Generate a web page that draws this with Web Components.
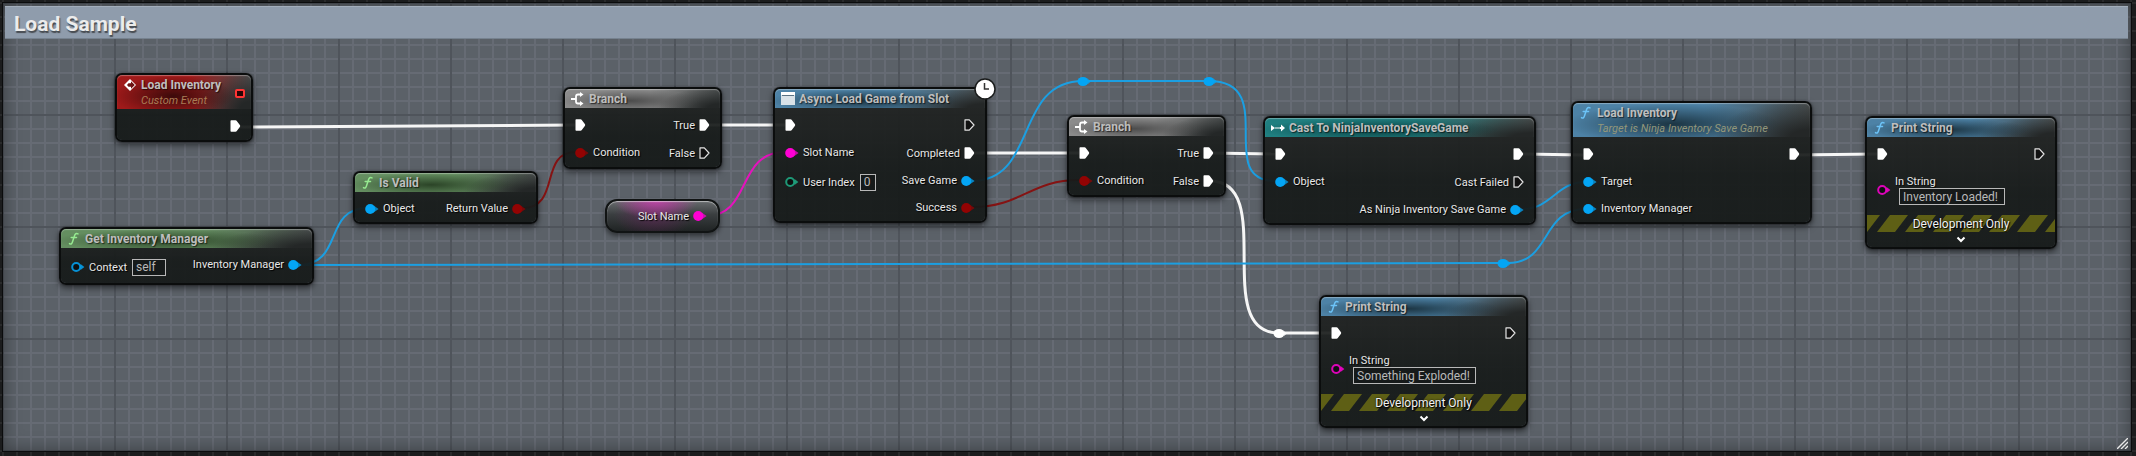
<!DOCTYPE html>
<html lang="en">
<head>
<meta charset="utf-8">
<title>Load Sample</title>
<style>
  html, body { height: 100%; }
  body { margin: 0; background: #1d1e1f; color: #e8e8e8; font: 11px/13px Roboto, "Liberation Sans", sans-serif; overflow: hidden; }
  blueprint-node, variable-node, reroute-knot { position: absolute; }
</style>
</head>
<body>
<graph-canvas>
  <comment-box slot="comment">Load Sample</comment-box>
  <wire-layer></wire-layer>

  <blueprint-node style="left:115px;top:73px;width:138px" kind="event" icon="event" subtitle="Custom Event" delegate>
    Load Inventory
    <node-pin slot="out" kind="exec" side="out" connected></node-pin>
  </blueprint-node>

  <blueprint-node style="left:59px;top:227px;width:255px" kind="pure" icon="func">
    Get Inventory Manager
    <node-pin slot="in" kind="object" label="Context" value="self" field="34"></node-pin>
    <node-pin slot="out" kind="object" side="out" label="Inventory Manager" connected></node-pin>
  </blueprint-node>

  <blueprint-node style="left:353px;top:171px;width:185px" kind="pure" icon="func">
    Is Valid
    <node-pin slot="in" kind="object" label="Object" connected></node-pin>
    <node-pin slot="out" kind="bool" side="out" label="Return Value" connected></node-pin>
  </blueprint-node>

  <blueprint-node style="left:563px;top:87px;width:159px" kind="flow" icon="branch">
    Branch
    <node-pin slot="in" kind="exec" connected></node-pin>
    <node-pin slot="in" kind="bool" label="Condition" connected></node-pin>
    <node-pin slot="out" kind="exec" side="out" label="True" connected></node-pin>
    <node-pin slot="out" kind="exec" side="out" label="False"></node-pin>
  </blueprint-node>

  <variable-node style="left:605px;top:199px;width:115px">
    <node-pin kind="string" side="out" label="Slot Name" connected></node-pin>
  </variable-node>

  <blueprint-node style="left:773px;top:87px;width:214px" kind="call" icon="window" latent>
    Async Load Game from Slot
    <node-pin slot="in" kind="exec" connected></node-pin>
    <node-pin slot="in" kind="string" label="Slot Name" connected></node-pin>
    <node-pin slot="in" kind="int" label="User Index" value="0" field="16"></node-pin>
    <node-pin slot="out" kind="exec" side="out"></node-pin>
    <node-pin slot="out" kind="exec" side="out" label="Completed" connected></node-pin>
    <node-pin slot="out" kind="object" side="out" label="Save Game" connected></node-pin>
    <node-pin slot="out" kind="bool" side="out" label="Success" connected></node-pin>
  </blueprint-node>

  <blueprint-node style="left:1067px;top:115px;width:159px" kind="flow" icon="branch">
    Branch
    <node-pin slot="in" kind="exec" connected></node-pin>
    <node-pin slot="in" kind="bool" label="Condition" connected></node-pin>
    <node-pin slot="out" kind="exec" side="out" label="True" connected></node-pin>
    <node-pin slot="out" kind="exec" side="out" label="False" connected></node-pin>
  </blueprint-node>

  <blueprint-node style="left:1263px;top:116px;width:273px" kind="cast" icon="cast">
    Cast To NinjaInventorySaveGame
    <node-pin slot="in" kind="exec" connected></node-pin>
    <node-pin slot="in" kind="object" label="Object" connected></node-pin>
    <node-pin slot="out" kind="exec" side="out" connected></node-pin>
    <node-pin slot="out" kind="exec" side="out" label="Cast Failed"></node-pin>
    <node-pin slot="out" kind="object" side="out" label="As Ninja Inventory Save Game" connected></node-pin>
  </blueprint-node>

  <blueprint-node style="left:1571px;top:101px;width:241px" kind="call" icon="func" subtitle="Target is Ninja Inventory Save Game">
    Load Inventory
    <node-pin slot="in" kind="exec" connected></node-pin>
    <node-pin slot="in" kind="object" label="Target" connected></node-pin>
    <node-pin slot="in" kind="object" label="Inventory Manager" connected></node-pin>
    <node-pin slot="out" kind="exec" side="out" connected></node-pin>
  </blueprint-node>

  <blueprint-node style="left:1865px;top:116px;width:192px" kind="call" icon="func" development>
    Print String
    <node-pin slot="in" kind="exec" connected></node-pin>
    <node-pin slot="in" kind="string" label="In String" value="Inventory Loaded!" field="106" stacked></node-pin>
    <node-pin slot="out" kind="exec" side="out"></node-pin>
  </blueprint-node>

  <blueprint-node style="left:1319px;top:295px;width:209px" kind="call" icon="func" development>
    Print String
    <node-pin slot="in" kind="exec" connected></node-pin>
    <node-pin slot="in" kind="string" label="In String" value="Something Exploded!" field="123" stacked></node-pin>
    <node-pin slot="out" kind="exec" side="out"></node-pin>
  </blueprint-node>

  <reroute-knot style="left:1077px;top:76px"></reroute-knot>
  <reroute-knot style="left:1203px;top:76px"></reroute-knot>
  <reroute-knot style="left:1497px;top:258px"></reroute-knot>
  <reroute-knot style="left:1273px;top:328px;color:#fff"></reroute-knot>
</graph-canvas>

<script>
const define = (name, render) => customElements.define(name, class extends HTMLElement {
  connectedCallback() {
    if (this.shadowRoot) return;
    this.attachShadow({ mode: 'open' }).innerHTML = render(this);
  }
});

define('graph-canvas', () => `
  <style>
    :host {
      display: grid; position: relative; box-sizing: border-box; min-height: 100vh;
      padding: 2px 4px 4px 2px;
      background:
        repeating-linear-gradient(90deg, #0000 0 2px, #292a2b 2px 4px, #0000 4px 14px),
        repeating-linear-gradient(#0000 0 2px, #292a2b 2px 4px, #0000 4px 14px),
        #1b1c1d;
    }
  </style>
  <slot name="comment"></slot>
  <slot></slot>`);

define('comment-box', () => `
  <style>
    :host {
      display: block; padding: 3px 3px 0 2px; border: 1px solid #0b0c0d;
      background:
        linear-gradient(90deg, #4f545b 2px, #0000 2px) -1px 0 / 112px 112px,
        linear-gradient(#4f545b 2px, #0000 2px) 0 -1px / 112px 112px,
        linear-gradient(90deg, #666b74 2px, #0000 2px) -1px 0 / 14px 14px,
        linear-gradient(#666b74 2px, #0000 2px) 0 -1px / 14px 14px,
        #5b6168;
      box-shadow: inset 0 0 18px #0006;
    }
    h1 {
      margin: 0; padding: 0 9px; height: 33px; box-sizing: border-box;
      font-size: 21px; line-height: 34px; font-weight: 700; color: #ececec;
      text-shadow: 1px 2px 1px #222a;
      background: #8f9cac; border-top: 1px solid #a3aebb; border-bottom: 1px solid #76828f;
    }
    svg { position: absolute; right: 8px; bottom: 7px; }
  </style>
  <h1><slot></slot></h1>
  <svg width="11" height="11" viewBox="0 0 11 11" stroke="#e8e8e8" stroke-width="1.4"><path d="M0 11 11 0M4 11 11 4M8 11 11 8"/></svg>`);

const wires = [
  ['exec', 'M236 127 L575 125'],
  ['exec', 'M706 125 L785 125'],
  ['exec', 'M970 153 L1079 153'],
  ['exec', 'M1210 153 L1275 154'],
  ['exec', 'M1210 181 C1278 181 1210 333 1279 333 L1331 333'],
  ['exec', 'M1520 154 L1583 155'],
  ['exec', 'M1794 155 L1877 154'],
  ['object', 'M298 265 C345 265 322 208 368 208'],
  ['object', 'M298 265 L1503 263'],
  ['object', 'M1508 263 C1552 263 1540 209 1586 209'],
  ['object', 'M1522 209 C1552 209 1556 182 1586 182'],
  ['object', 'M972 181 C1038 181 1014 81 1083 81 L1209 81'],
  ['object', 'M1209 81 C1280 81 1214 181 1275 181'],
  ['bool', 'M522 208 C562 208 538 152 576 152'],
  ['bool', 'M972 207 C1022 207 1030 180 1079 180'],
  ['string', 'M706 216 C752 216 736 152 785 152'],
];
define('wire-layer', () => `
  <style>
    :host { position: absolute; inset: 0; overflow: hidden; pointer-events: none; }
    path { fill: none; stroke-width: 2; }
    .exec { stroke: #f6f6f6; stroke-width: 3; }
    .object { stroke: #1b9fe2; }
    .bool { stroke: #851313; }
    .string { stroke: #e512bd; }
  </style>
  <svg width="2136" height="456" viewBox="0 0 2136 456">${wires.map(([k, d]) => `<path class="${k}" d="${d}"/>`).join('')}</svg>`);

define('reroute-knot', () => `
  <style>:host { color: #04a5f5; width: 16px; height: 11px; } svg { display: block; }</style>
  <svg width="16" height="11" viewBox="0 0 16 11" fill="currentColor"><ellipse cx="6" cy="5.5" rx="5.5" ry="4.5"/><path d="M11 3 14 5.5 11 8Z" opacity=".8"/></svg>`);

const pinColors = { exec: '#ffffff', object: '#04a5f5', bool: '#930303', string: '#ff00d4', int: '#1fae86' };
const pinIcon = (kind, connected) => {
  const color = pinColors[kind];
  if (kind === 'exec') {
    return connected
      ? `<svg width="11" height="12" viewBox="0 0 11 12"><path d="M.5 1Q.5.3 1.2.3H5.5Q6.3.3 6.8 1L10 5.3Q10.400 6 10 6.7L6.8 11Q6.3 11.7 5.5 11.7H1.2Q.5 11.7.5 11Z" fill="#fff"/></svg>`
      : `<svg width="11" height="12" viewBox="0 0 11 12"><path d="M1 .8H5.3L10 6 5.3 11.2H1Z" fill="#111" stroke="#e4e4e4" stroke-width="1.2" stroke-linejoin="round"/></svg>`;
  }
  return connected
    ? `<svg width="14" height="12" viewBox="0 0 14 12" fill="${color}"><path d="M9 2.8 13.6 6 9 9.2Z" opacity=".75"/><circle cx="5.2" cy="6" r="5"/></svg>`
    : `<svg width="14" height="12" viewBox="0 0 14 12"><path d="M9.5 3 13.4 6 9.5 9Z" fill="${color}" opacity=".85"/><circle cx="5.2" cy="6" r="4" fill="#0c0e0e" stroke="${color}" stroke-width="2" opacity=".85"/></svg>`;
};
define('node-pin', el => {
  const kind = el.getAttribute('kind'), label = el.getAttribute('label'), value = el.getAttribute('value');
  const text = !label ? '' : value === null ? `<span>${label}</span>` : `<label for="field">${label}</label>`;
  const field = value === null ? '' : `<input id="field" type="text" value="${value}" style="width:${el.getAttribute('field')}px">`;
  return `
  <style>
    :host { display: flex; align-items: center; gap: 4px; height: 27px; white-space: nowrap; }
    :host([kind="exec"]) { height: 28px; }
    :host([value]) { height: 32px; }
    :host([side="out"]) { flex-direction: row-reverse; }
    :host([stacked]) { height: 30px; padding: 7px 0 10px; }
    svg { display: block; flex: none; }
    span, label { text-shadow: 1px 1px 1px #000; }
    .group { display: flex; align-items: center; gap: 5px; }
    :host([stacked]) .group { flex-direction: column; align-items: flex-start; gap: 0; }
    input {
      box-sizing: border-box; height: 17px; margin: 0; padding: 0 3px; border: 1px solid #b8b8b8; border-radius: 0;
      background: #14171799; color: #b9b9b9; font: 12px/15px Roboto, "Liberation Sans", sans-serif; outline: 0;
    }
    :host([stacked]) input { margin-left: 4px; }
  </style>
  ${pinIcon(kind, el.hasAttribute('connected'))}<div class="group">${text}${field}</div>`;
});

const icons = {
  func: '<path d="M2.5 11.6C4 12.8 5 11.8 5.7 9.3L7.5 3.7C8.1 1.7 9.4 1 11 1.9M4.2 5.5H9.5" fill="none" stroke="currentColor" stroke-width="1.5" stroke-linecap="round"/>',
  branch: '<path d="M0 7H4.5M10 2.5H7Q5 2.5 5 4.5V9.5Q5 11.5 7 11.5H10" fill="none" stroke="#fff" stroke-width="1.8"/><path d="M9 0 12.5 2.5 9 5ZM9 9 12.5 11.5 9 14Z" fill="#fff"/>',
  window: '<path d="M0 0H14V13H0Z" fill="#d9e2e8"/><path d="M0 0H14V3H0Z" fill="#fff"/><path d="M1 3.5H13" stroke="#5b7282"/>',
  event: '<path d="M7 1 13 7 7 13 1 7Z" fill="#fff"/><path d="M8 3.2 11.8 7 8 10.8V8.8H5.5L4 7 5.5 5.2H8Z" fill="#6c1212"/>',
  cast: '<path d="M0 4 4 7 0 10ZM10 3.5 14 7 10 10.5ZM8.5 6H11V8H8.5ZM4.5 6H5.5V8H4.5ZM6.5 6H7.5V8H6.5Z" fill="#fff"/>',
};
define('blueprint-node', el => `
  <style>
    :host {
      box-sizing: border-box; display: block; border: 2px solid #0b0d0d; border-radius: 7px;
      background: linear-gradient(#232524f0, #171b1af0 60%, #161a19f0);
      background-clip: padding-box;
      box-shadow: 0 3px 6px #0008, 0 0 2px #0008;
      --tint: #4d82a6; --shade: #1c3543; --mark: #6cc3f7;
    }
    :host([kind="pure"]) { --tint: #648e60; --shade: #2b4427; --mark: #96ea90; }
    :host([kind="flow"]) { --tint: #8b8b8b; --shade: #4c4c4c; }
    :host([kind="event"]) { --tint: #a01a1a; --shade: #3c0a0a; }
    :host([kind="cast"]) { --tint: #1f7f80; --shade: #0c4142; }
    header {
      display: flex; align-items: flex-start; gap: 4px; box-sizing: border-box; min-height: 19px; padding: 0 6px;
      border-radius: 5px 5px 0 0; box-shadow: inset 0 1px 1px #fff5;
      background:
        radial-gradient(ellipse 45% 60% at 42% 62%, var(--shade), #0000),
        radial-gradient(ellipse 40% 110% at 100% 100%, #242727 20%, #0000),
        linear-gradient(90deg, var(--tint) 55%, #4b4f4f);
    }
    header.tall { min-height: 34px; padding-top: 2px; }
    header > svg { flex: none; margin-top: 3px; color: var(--mark); }
    h2 { margin: 0; font-size: 12px; line-height: 20px; font-weight: 700; color: #bebebe; text-shadow: 1px 1px 1px #0009; white-space: nowrap; }
    h2, header div { height: 19px; }
    .tall h2 { height: 16px; line-height: 16px; }
    header.tall div { height: auto; }
    .tall > svg { margin-top: 1px; }
    p { margin: 0; line-height: 15px; font-style: italic; color: #93977a; white-space: nowrap; }
    :host([kind="event"]) p { color: #a97c55; }
    .delegate { align-self: center; box-sizing: border-box; width: 10px; height: 9px; margin-left: auto; border: 2px solid #ff3434; border-radius: 2px; background: #2a0505; }
    .pins { display: flex; justify-content: space-between; padding: 3px 10px 0; }
    .dev {
      display: block; position: relative; height: 17px; color: #f2f2f2;
      font-size: 12px; line-height: 18px; text-align: center; text-shadow: 1px 1px 1px #000, 0 0 2px #000;
    }
    .dev svg { position: absolute; inset: 0; }
    .dev b { position: relative; font-weight: 400; }
    button { display: flex; justify-content: center; align-items: center; width: 100%; height: 15px; padding: 0; border: 0; background: none; }
    .clock { position: absolute; top: -11px; right: -11px; }
  </style>
  <header class="${el.hasAttribute('subtitle') ? 'tall' : ''}">
    <svg width="14" height="14" viewBox="0 0 14 14">${icons[el.getAttribute('icon')]}</svg>
    <div><h2><slot></slot></h2>${el.hasAttribute('subtitle') ? `<p>${el.getAttribute('subtitle')}</p>` : ''}</div>
    ${el.hasAttribute('delegate') ? '<span class="delegate"></span>' : ''}
  </header>
  <div class="pins"><div><slot name="in"></slot></div><div><slot name="out"></slot></div></div>
  ${el.hasAttribute('development') ? `
    <div class="dev">
      <svg width="100%" height="17"><defs><pattern id="hazard" width="28" height="17" patternUnits="userSpaceOnUse"><path d="M10 17H28L41 0H23ZM-18 17H0L13 0H-5Z" fill="#5e5f15"/></pattern></defs><rect width="100%" height="17" fill="url(#hazard)"/></svg>
      <b>Development Only</b>
    </div>
    <button type="button" aria-label="Show advanced pins"><svg width="10" height="7" viewBox="0 0 10 7"><path d="M1.5 1.5 5 5 8.5 1.5" fill="none" stroke="#fff" stroke-width="2"/></svg></button>` : ''}
  ${el.hasAttribute('latent') ? '<svg class="clock" width="22" height="22" viewBox="0 0 22 22"><circle cx="11" cy="11" r="10" fill="#fff" stroke="#1a1c1c" stroke-width="1.5"/><path d="M10.5 5V11H15" fill="none" stroke="#333" stroke-width="1.5"/></svg>' : ''}`);

define('variable-node', () => `
  <style>
    :host {
      box-sizing: border-box; display: flex; justify-content: flex-end; align-items: center; height: 34px; padding-right: 11px;
      border: 2px solid #111414; border-radius: 12px;
      background:
        radial-gradient(ellipse 38% 60% at 44% 0, #cf3fb3cc, #0000),
        radial-gradient(ellipse 36% 80% at 42% 45%, #7a206a77, #0000),
        linear-gradient(#686c6e, #3a3e40 45%, #202424);
      box-shadow: inset 0 1px 1px #fff8, 0 3px 5px #0007;
    }
  </style>
  <slot></slot>`);
</script>
</body>
</html>
